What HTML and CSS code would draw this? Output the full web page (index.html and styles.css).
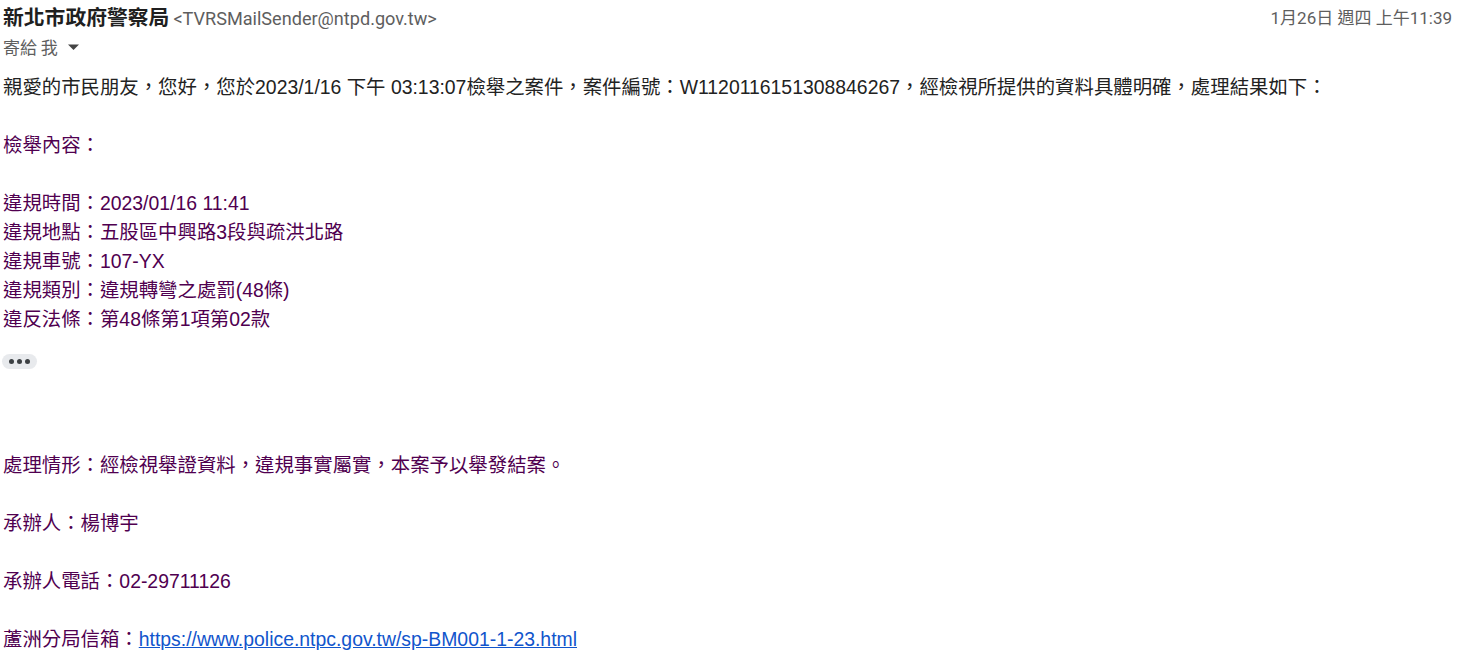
FILE: index.html
```html
<!DOCTYPE html>
<html lang="zh-Hant">
<head>
<meta charset="utf-8">
<title>新北市政府警察局</title>
<link rel="stylesheet" href="styles.css">
</head>
<body>
<div class="mail">
  <div class="head">
    <div class="from"><span class="name">新北市政府警察局</span> <span class="addr">&lt;TVRSMailSender@ntpd.gov.tw&gt;</span></div>
    <div class="date">1月26日 週四 上午11:39</div>
  </div>
  <div class="to">寄給 我 <svg class="caret" width="13" height="8" viewBox="0 0 13 8"><path d="M1 1.5h11L6.5 7z" fill="#444"/></svg></div>
  <div class="body">
    <div class="intro">親愛的市民朋友，您好，您於2023/1/16 下午 03:13:07檢舉之案件，案件編號：W1120116151308846267，經檢視所提供的資料具體明確，處理結果如下：</div>
    <div class="blank"></div>
    <div class="quoted">
      <div>檢舉內容：</div>
      <div class="blank"></div>
      <div>違規時間：2023/01/16 11:41</div>
      <div>違規地點：五股區中興路3段與疏洪北路</div>
      <div>違規車號：107-YX</div>
      <div>違規類別：違規轉彎之處罰(48條)</div>
      <div>違反法條：第48條第1項第02款</div>
    </div>
    <div class="more"><span></span><span></span><span></span></div>
    <div class="quoted rest">
      <div>處理情形：經檢視舉證資料，違規事實屬實，本案予以舉發結案。</div>
      <div class="blank"></div>
      <div>承辦人：楊博宇</div>
      <div class="blank"></div>
      <div>承辦人電話：02-29711126</div>
      <div class="blank"></div>
      <div>蘆洲分局信箱：<a href="#">https://www.police.ntpc.gov.tw/sp-BM001-1-23.html</a></div>
    </div>
  </div>
</div>
</body>
</html>
```
FILE: styles.css
```css
html, body {
  margin: 0;
  padding: 0;
  background: #ffffff;
}
.mail {
  padding: 0 9px 0 3px;
}
.head {
  display: flex;
  justify-content: space-between;
  align-items: center;
  margin-top: 2px;
  height: 28px;
}
.from {
  white-space: nowrap;
}
.name {
  font-family: "Noto Sans CJK TC", sans-serif;
  font-weight: 700;
  font-size: 20.8px;
  color: #1f1f1f;
}
.addr {
  font-family: Roboto, "Noto Sans CJK TC", sans-serif;
  font-size: 18.1px;
  color: #5e5e5e;
}
.date {
  font-family: Roboto, "Noto Sans CJK TC", sans-serif;
  font-size: 17px;
  color: #5e5e5e;
}
.to {
  display: flex;
  align-items: center;
  gap: 5px;
  margin-top: 4px;
  height: 24px;
  font-family: "Noto Sans CJK TC", sans-serif;
  font-size: 17px;
  color: #5e5e5e;
}
.caret {
  margin-left: 4px;
  margin-top: 2px;
}
.body {
  margin-top: 15px;
  font-family: "Liberation Sans", Arial, "Noto Sans CJK TC", sans-serif;
  font-size: 19.4px;
  line-height: 29px;
  color: #222222;
}
.blank {
  height: 29px;
}
.quoted {
  color: #500050;
}
.more {
  display: flex;
  align-items: center;
  justify-content: center;
  gap: 3px;
  width: 35px;
  height: 15px;
  margin-top: 20px;
  margin-left: -1px;
  border-radius: 8px;
  background: #e8eaed;
}
.more span {
  width: 5px;
  height: 5px;
  border-radius: 50%;
  background: #3c4043;
}
.rest {
  margin-top: 82px;
}
.rest a {
  color: #1155cc;
  text-decoration: underline;
}
```
